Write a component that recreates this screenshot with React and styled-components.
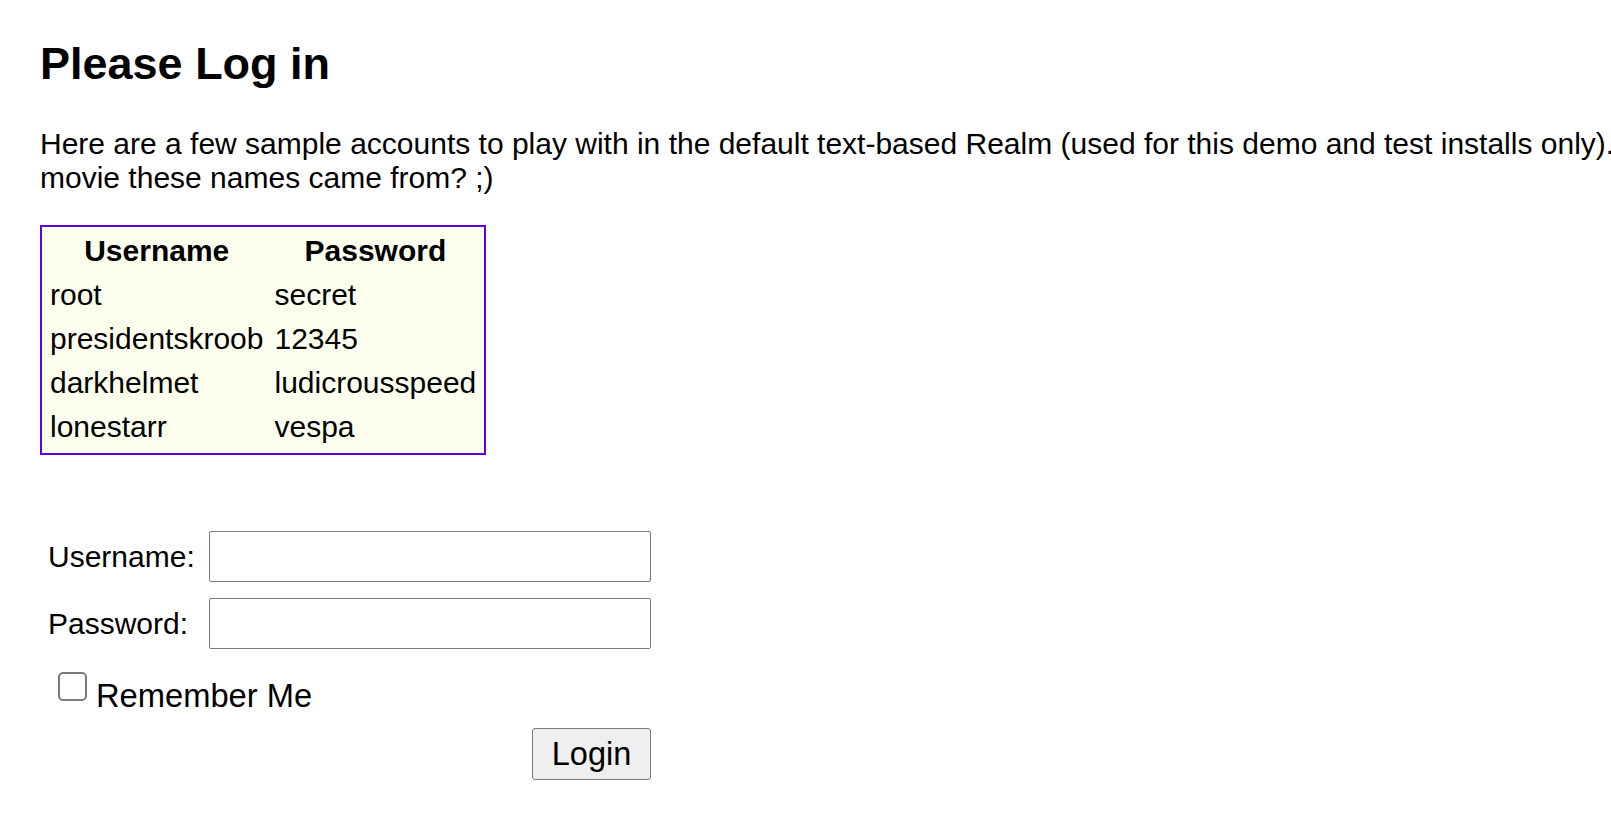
import React from "react";
import styled, { createGlobalStyle } from "styled-components";

const GlobalStyle = createGlobalStyle`
  html, body {
    margin: 0;
    padding: 0;
    overflow: hidden;
    background: #ffffff;
  }
  body {
    font-family: "Liberation Sans", Arial, sans-serif;
    color: #000000;
  }
`;

const Page = styled.main`
  padding: 38px 0 0 40px;
  font-size: 30px;
`;

const Title = styled.h1`
  margin: 0 0 37px;
  font-size: 45px;
  font-weight: bold;
  line-height: normal;
`;

const Intro = styled.p`
  margin: 0 0 30px;
  width: 1900px;
  font-size: 30px;
  line-height: normal;
`;

const SampleTable = styled.table`
  border: 2px solid #5e00dc;
  border-collapse: separate;
  border-spacing: 5px 6px;
  background-color: #fdffee;
  font-size: 30px;
`;

const HeadCell = styled.th`
  padding: 1px 3px 3px;
  font-weight: bold;
  text-align: center;
  line-height: normal;
`;

const Cell = styled.td`
  padding: 1px 3px 3px;
  text-align: left;
  line-height: normal;
`;

const LoginForm = styled.form`
  margin-top: 76px;
  padding-left: 8px;
  display: grid;
  grid-template-columns: 161px 442px;
  row-gap: 16px;
  font-size: 30px;
`;

const Label = styled.label`
  align-self: center;
  line-height: normal;
`;

const TextInput = styled.input`
  box-sizing: border-box;
  width: 442px;
  height: 51px;
  margin: 0;
  padding: 2px 6px;
  border: 1px solid #7a7a7a;
  border-radius: 2px;
  background: #ffffff;
  font-family: inherit;
  font-size: 30px;
`;

const RememberRow = styled.div`
  grid-column: 1 / span 2;
  display: block;
  padding-left: 10px;
  margin-top: 7px;
  font-size: 32.7px;
  line-height: normal;
`;

const CheckBox = styled.input`
  appearance: none;
  -webkit-appearance: none;
  display: inline-block;
  vertical-align: baseline;
  box-sizing: border-box;
  width: 29px;
  height: 29px;
  margin: 0 9px 6px 0;
  border: 2px solid #7a7a7a;
  border-radius: 5px;
  background: #ffffff;
`;

const ButtonCell = styled.div`
  grid-column: 2;
  display: flex;
  justify-content: flex-end;
  margin-top: -3px;
`;

const Button = styled.button`
  box-sizing: border-box;
  width: 119px;
  height: 52px;
  padding: 0;
  border: 1px solid #7a7a7a;
  border-radius: 3px;
  background: #efefef;
  color: #000000;
  font-family: inherit;
  font-size: 32.5px;
  line-height: normal;
`;

const accounts = [
  ["root", "secret"],
  ["presidentskroob", "12345"],
  ["darkhelmet", "ludicrousspeed"],
  ["lonestarr", "vespa"],
];

export default function App() {
  return (
    <>
      <GlobalStyle />
      <Page>
        <Title>Please Log in</Title>
        <Intro>
          Here are a few sample accounts to play with in the default text-based
          Realm (used for this demo and test installs only). Do you remember the
          movie these names came from? ;)
        </Intro>
        <SampleTable>
          <thead>
            <tr>
              <HeadCell>Username</HeadCell>
              <HeadCell>Password</HeadCell>
            </tr>
          </thead>
          <tbody>
            {accounts.map(([u, p]) => (
              <tr key={u}>
                <Cell>{u}</Cell>
                <Cell>{p}</Cell>
              </tr>
            ))}
          </tbody>
        </SampleTable>
        <LoginForm onSubmit={(e) => e.preventDefault()}>
          <Label htmlFor="username">Username:</Label>
          <TextInput id="username" type="text" name="username" />
          <Label htmlFor="password">Password:</Label>
          <TextInput id="password" type="password" name="password" />
          <RememberRow>
            <CheckBox type="checkbox" id="rememberMe" name="rememberMe" />
            <label htmlFor="rememberMe">Remember Me</label>
          </RememberRow>
          <ButtonCell>
            <Button type="submit">Login</Button>
          </ButtonCell>
        </LoginForm>
      </Page>
    </>
  );
}
